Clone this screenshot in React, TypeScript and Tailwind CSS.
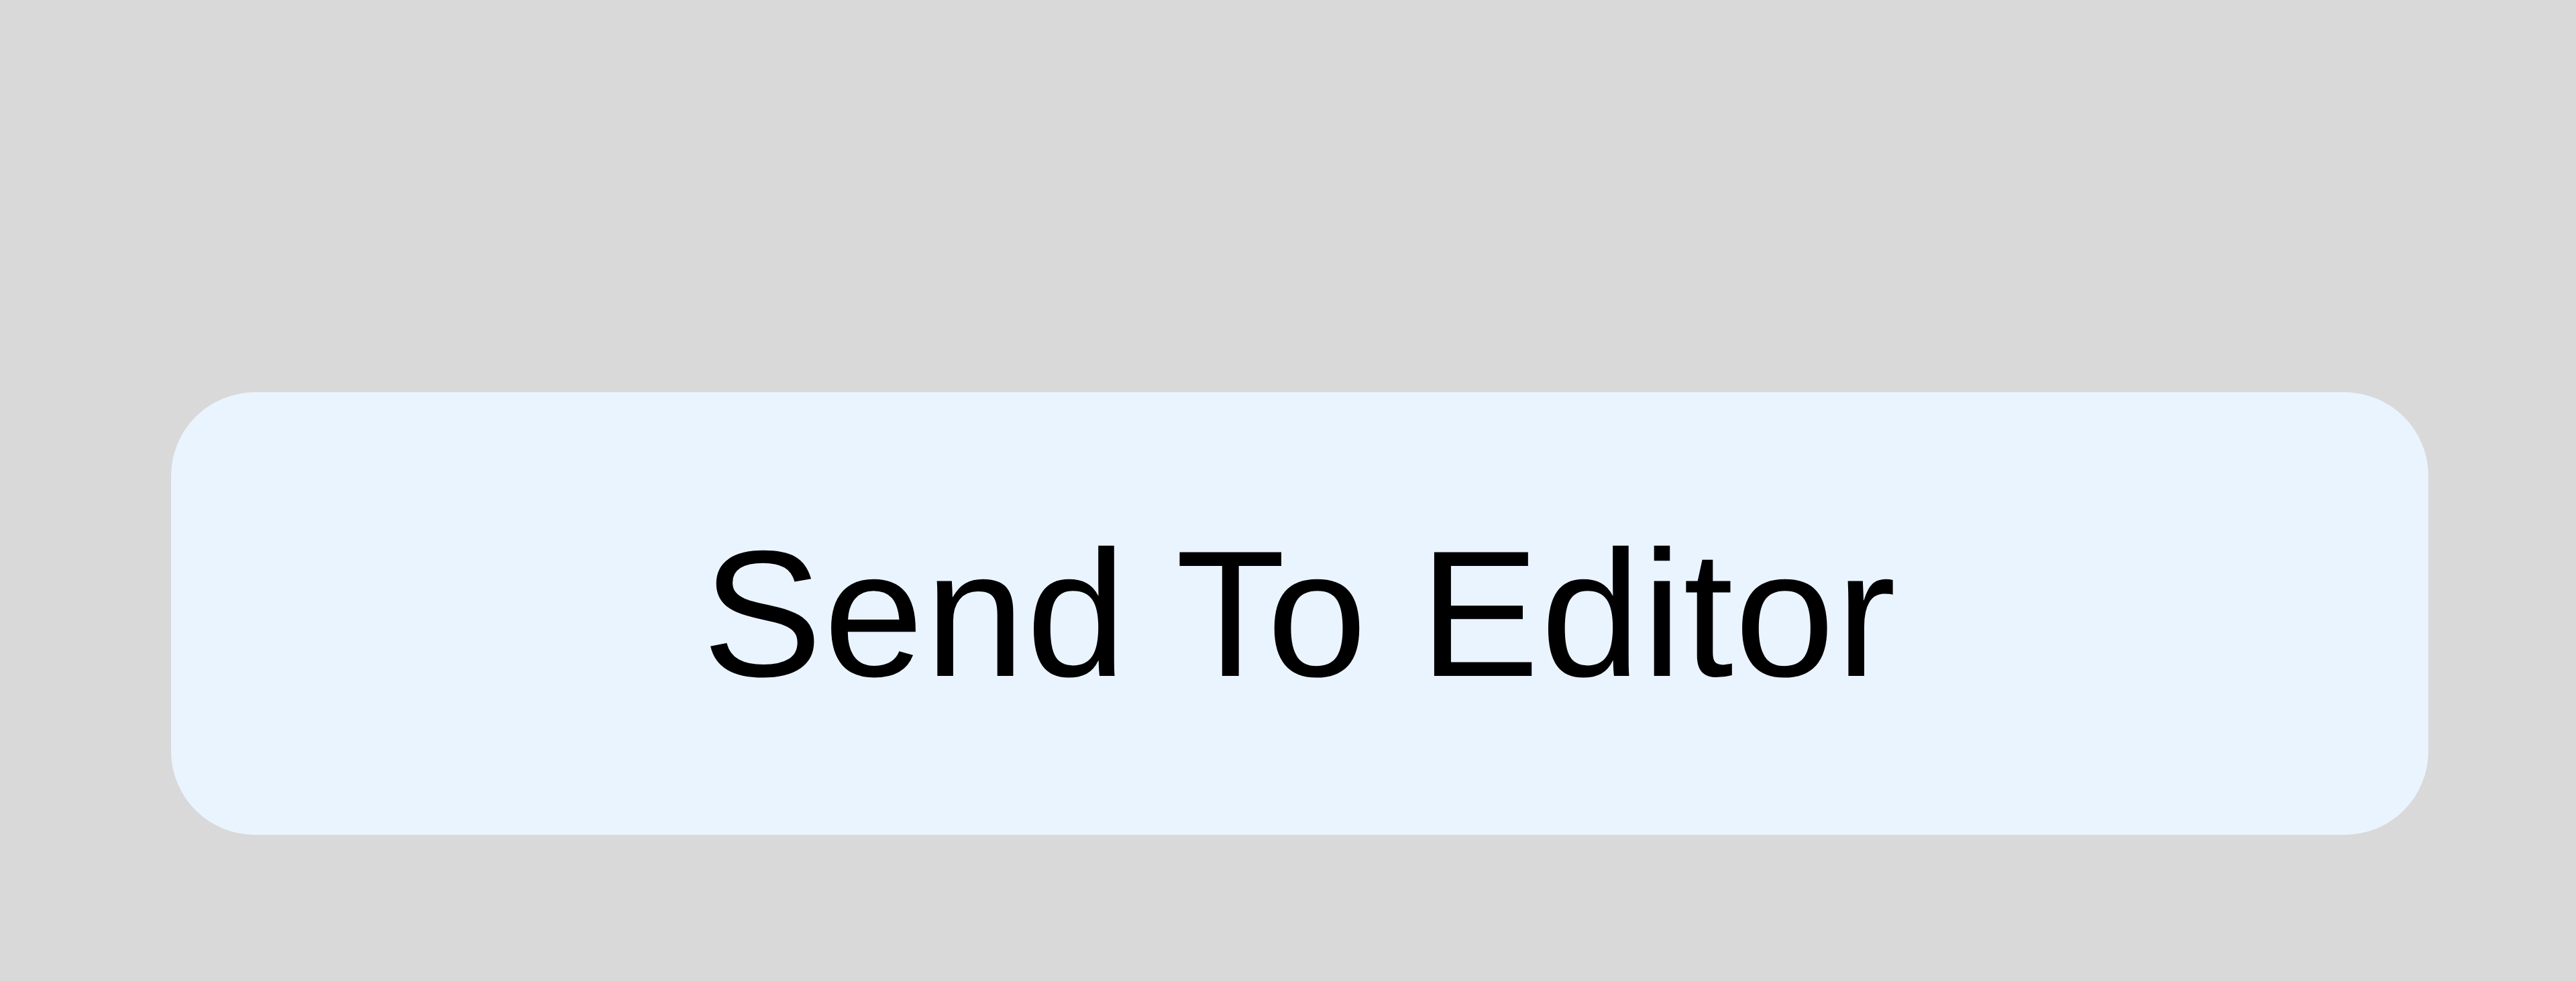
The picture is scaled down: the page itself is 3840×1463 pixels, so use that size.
import React from 'react';

const App: React.FC = () => {
  return (
    <div className="w-full h-[1463px] bg-[#d9d9d9] pl-[255px] pr-[220px] pt-[585px]">
      <button
        className="w-full h-[660px] rounded-[125px] bg-[#eaf4fe] flex items-center justify-center text-black text-[268px] tracking-[2px] leading-none"
        style={{ fontFamily: '"Liberation Sans", Arial, sans-serif' }}
      >
        Send To Editor
      </button>
    </div>
  );
};

export default App;
